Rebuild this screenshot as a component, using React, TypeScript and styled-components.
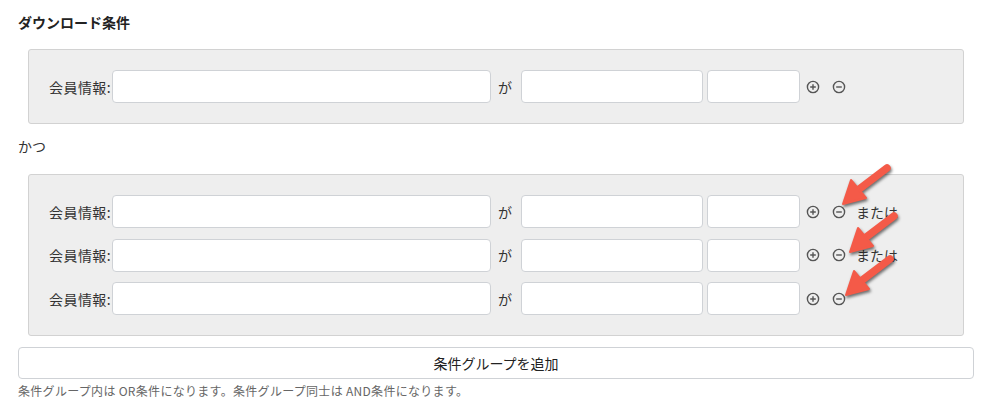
import styled, { createGlobalStyle } from 'styled-components';

const GlobalStyle = createGlobalStyle`
  body {
    margin: 0;
    background: #fff;
    font-family: "Noto Sans CJK JP", "Noto Sans", sans-serif;
    color: #333;
  }
`;

type ArrowSpec = { dx: number; dy: number };

interface RowData {
  or?: boolean;
  arrow?: ArrowSpec;
}

const groups: RowData[][] = [
  [{}],
  [
    { or: true, arrow: { dx: 4, dy: -46 } },
    { or: true, arrow: { dx: 11, dy: -41 } },
    { arrow: { dx: 7, dy: -42 } },
  ],
];

function PlusIcon() {
  return (
    <svg width="14" height="14" viewBox="0 0 14 14">
      <circle cx="7" cy="7" r="5.6" fill="none" stroke="#555" strokeWidth="1.4" />
      <path d="M7 4.2v5.6M4.2 7h5.6" stroke="#555" strokeWidth="1.4" />
    </svg>
  );
}

function MinusIcon() {
  return (
    <svg width="14" height="14" viewBox="0 0 14 14">
      <circle cx="7" cy="7" r="5.6" fill="none" stroke="#555" strokeWidth="1.4" />
      <path d="M4.2 7h5.6" stroke="#555" strokeWidth="1.4" />
    </svg>
  );
}

function Arrow({ dx, dy }: ArrowSpec) {
  return (
    <ArrowSvg width="60" height="52" viewBox="0 0 60 52" style={{ left: dx, top: dy }}>
      <path d="M51 9 L22 31" stroke="#f45a48" strokeWidth="7.5" strokeLinecap="round" />
      <polygon points="7,45 30,39 15,21" fill="#f45a48" stroke="#f45a48" strokeWidth="2" strokeLinejoin="round" />
    </ArrowSvg>
  );
}

function ConditionRow({ row }: { row: RowData }) {
  return (
    <Row>
      <Label>会員情報:</Label>
      <Input $w={379} />
      <Ga>が</Ga>
      <Input $w={182} />
      <Input $w={93} />
      <IconButton>
        <PlusIcon />
      </IconButton>
      <IconButton>
        <MinusIcon />
        {row.arrow && <Arrow {...row.arrow} />}
      </IconButton>
      {row.or && <OrText>または</OrText>}
    </Row>
  );
}

export default function App() {
  return (
    <>
      <GlobalStyle />
      <Page>
        <Title>ダウンロード条件</Title>
        <Panel>
          {groups[0].map((r, i) => (
            <ConditionRow key={i} row={r} />
          ))}
        </Panel>
        <AndText>かつ</AndText>
        <Panel>
          {groups[1].map((r, i) => (
            <ConditionRow key={i} row={r} />
          ))}
        </Panel>
        <AddButton>条件グループを追加</AddButton>
        <Help>条件グループ内は OR条件になります。条件グループ同士は AND条件になります。</Help>
      </Page>
    </>
  );
}

const Page = styled.div`
  width: 956px;
  padding: 12px 0 0 18px;
  display: flex;
  flex-direction: column;
`;

const Title = styled.div`
  font-size: 14px;
  font-weight: bold;
  line-height: 20px;
  color: #222;
  margin-bottom: 17px;
`;

const Panel = styled.div`
  margin: 0 10px;
  background: #eeeeee;
  border: 1px solid #d2d2d2;
  border-radius: 3px;
  padding: 20px 0;
  display: flex;
  flex-direction: column;
  gap: 10.5px;
`;

const Row = styled.div`
  display: flex;
  align-items: center;
  height: 33px;
`;

const Label = styled.div`
  width: 82px;
  text-align: right;
  font-size: 14px;
  letter-spacing: 0.4px;
  padding-right: 1px;
`;

const Input = styled.div<{ $w: number }>`
  width: ${(p) => p.$w}px;
  height: 33px;
  box-sizing: border-box;
  background: #fff;
  border: 1px solid #cfd2d6;
  border-radius: 4px;
  margin-right: 4px;
`;

const Ga = styled.div`
  font-size: 14px;
  margin: 0 9px 0 3px;
`;

const IconButton = styled.div`
  position: relative;
  width: 14px;
  height: 14px;
  margin-left: 2px;
  margin-right: 10px;
  display: flex;
`;

const ArrowSvg = styled.svg`
  position: absolute;
  overflow: visible;
  filter: drop-shadow(1px 2px 1.5px rgba(0, 0, 0, 0.55));
  pointer-events: none;
`;

const OrText = styled.div`
  font-size: 14px;
  margin-left: 0;
`;

const AndText = styled.div`
  font-size: 14px;
  line-height: 20px;
  margin: 12px 0 18px;
`;

const AddButton = styled.div`
  margin-top: 11px;
  height: 32px;
  box-sizing: border-box;
  border: 1px solid #cfd2d6;
  border-radius: 4px;
  background: #fff;
  display: flex;
  align-items: center;
  justify-content: center;
  font-size: 14px;
  color: #222;
`;

const Help = styled.div`
  margin-top: 4px;
  font-size: 12px;
  line-height: 16px;
  letter-spacing: 0.3px;
  color: #666;
`;
